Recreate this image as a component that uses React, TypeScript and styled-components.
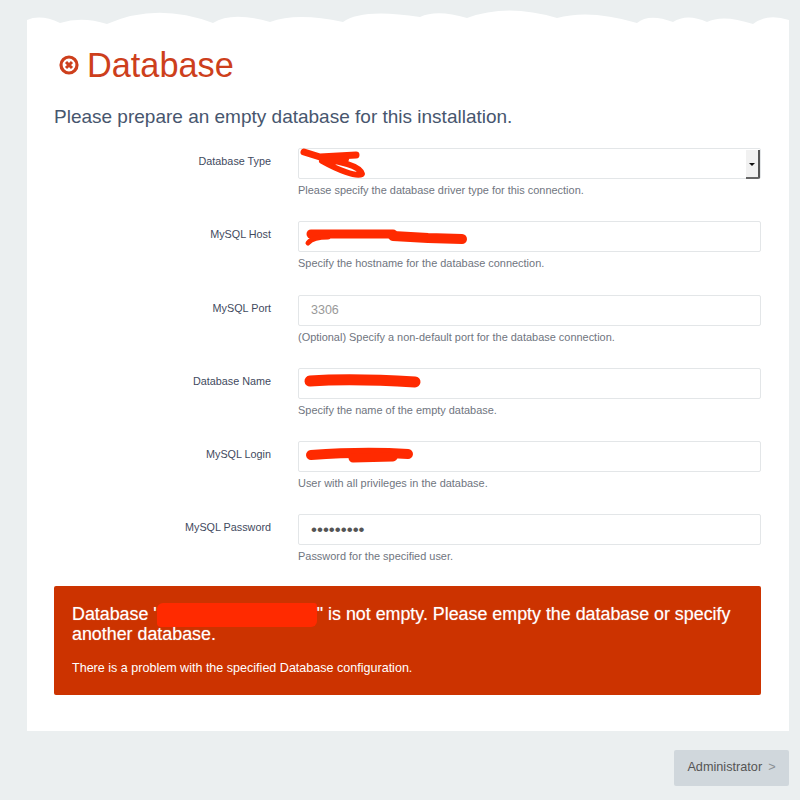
import React from 'react'
import styled, { createGlobalStyle } from 'styled-components'

const GlobalStyle = createGlobalStyle`
  html, body {
    margin: 0;
    padding: 0;
    background: #ebeff0;
    font-family: 'Liberation Sans', Arial, sans-serif;
  }
`

const Page = styled.div`
  width: 800px;
  height: 800px;
  padding: 8px 11px 0 27px;
  box-sizing: border-box;
  overflow: hidden;
`

const CloudEdge = styled.svg`
  display: block;
  width: 762px;
  height: 16px;
`

const Card = styled.main`
  background: #fff;
  height: 707px;
  padding: 19px 28px 0 27px;
  box-sizing: border-box;
`

const Title = styled.h2`
  margin: 0;
  display: flex;
  align-items: center;
  gap: 8px;
  padding-left: 5px;
  height: 44px;
  font-size: 34.3px;
  font-weight: normal;
  color: #cd3f1c;
`

const Lead = styled.h3`
  margin: 17px 0 0;
  font-size: 19px;
  line-height: 26px;
  font-weight: normal;
  color: #47566e;
`

const Form = styled.form`
  margin-top: 18.2px;
  display: flex;
  flex-direction: column;
`

const Row = styled.div`
  display: grid;
  grid-template-columns: 217px 463px;
  column-gap: 27px;
  height: 73.2px;
`

const Label = styled.label`
  padding-top: 6px;
  text-align: right;
  font-size: 10.8px;
  line-height: 14px;
  color: #3f4a5e;
`

const Control = styled.div`
  position: relative;
  height: 31px;
`

const Input = styled.input<{ $masked?: boolean }>`
  width: 100%;
  height: 31px;
  box-sizing: border-box;
  padding: 0 12px;
  border: 1px solid #e3e6e8;
  border-radius: 2px;
  outline: none;
  background: #fff;
  font-family: inherit;
  font-size: ${(p) => (p.$masked ? '17px' : '12.5px')};
  color: #555;

  &::placeholder {
    color: #999;
    opacity: 1;
  }
`

const SelectBox = styled.div`
  height: 31px;
  box-sizing: border-box;
  border: 1px solid #e3e6e8;
  border-radius: 2px;
  display: flex;
  justify-content: flex-end;
  padding: 1px 0 0;
`

const SelectArrow = styled.div`
  width: 12px;
  height: 27px;
  background: #f1f1f1;
  border-right: 2px solid #555;
  border-bottom: 2px solid #666;
  border-radius: 0 0 2px 0;
  display: flex;
  align-items: center;
  justify-content: center;

  &::after {
    content: '';
    margin-top: 2px;
    border-top: 3px solid #111;
    border-left: 3px solid transparent;
    border-right: 3px solid transparent;
  }
`

const Scribble = styled.svg`
  position: absolute;
  left: 0;
  top: 0;
  width: 463px;
  height: 31px;
  overflow: visible;
  fill: none;
  stroke: #ff2a00;
  stroke-linecap: round;
  stroke-linejoin: round;
`

const Hint = styled.p`
  margin: 5px 0 0;
  font-size: 10.95px;
  line-height: 13px;
  color: #6f7580;
`

const Alert = styled.div`
  margin-top: -1.2px;
  height: 109px;
  box-sizing: border-box;
  padding: 18px 18px 0;
  background: #cc3300;
  border-radius: 2px;
  color: #fff;
`

const AlertTitle = styled.p`
  margin: 0;
  font-size: 17.85px;
  line-height: 20px;
  text-shadow: 0 0 1px rgba(255, 255, 255, 0.5);
`

const Redacted = styled.span`
  display: inline-block;
  width: 160px;
  height: 24px;
  margin: -4px 0;
  vertical-align: middle;
  background: #ff2a00;
  border-radius: 6px 3px 6px 4px;
`

const AlertText = styled.p`
  margin: 16px 0 0;
  font-size: 12.55px;
  line-height: 16px;
`

const Footer = styled.div`
  display: flex;
  justify-content: flex-end;
  margin-top: 19px;
`

const NextButton = styled.button`
  width: 115px;
  height: 36px;
  padding: 0 0 2px;
  border: none;
  border-radius: 2px;
  background: #d0d7dc;
  font-family: inherit;
  font-size: 12.7px;
  color: #555;

  span {
    margin-left: 6px;
    color: #8a8f94;
  }
`

const fields = [
  { label: 'MySQL Host', hint: 'Specify the hostname for the database connection.', scribble: 'host' },
  { label: 'MySQL Port', hint: '(Optional) Specify a non-default port for the database connection.', placeholder: '3306' },
  { label: 'Database Name', hint: 'Specify the name of the empty database.', scribble: 'name' },
  { label: 'MySQL Login', hint: 'User with all privileges in the database.', scribble: 'login' },
  { label: 'MySQL Password', hint: 'Password for the specified user.', password: true },
]

function FieldScribble({ kind }: { kind: string }) {
  if (kind === 'type') {
    return (
      <Scribble viewBox='0 0 463 31'>
        <path d='M6 4 L22 9 L58 7' strokeWidth='7' />
        <path d='M48 11 L26 13 C40 12 62 18 64 26 C58 29 40 22 24 13' strokeWidth='6' />
      </Scribble>
    )
  }
  if (kind === 'host') {
    return (
      <Scribble viewBox='0 0 463 31'>
        <path d='M13 13 L95 13' strokeWidth='9' />
        <path d='M95 15 L130 17 L164 18' strokeWidth='10' />
        <path d='M10 22 C14 17 20 16 30 16' strokeWidth='5' />
      </Scribble>
    )
  }
  if (kind === 'name') {
    return (
      <Scribble viewBox='0 0 463 31'>
        <path d='M12 13 C40 11 85 12 117 14' strokeWidth='11' />
      </Scribble>
    )
  }
  return (
    <Scribble viewBox='0 0 463 31'>
      <path d='M13 14 C40 12 80 11 110 13' strokeWidth='10' />
      <path d='M55 17 L95 16' strokeWidth='9' />
    </Scribble>
  )
}

export default function App() {
  return (
    <Page>
      <GlobalStyle />
      <CloudEdge viewBox='0 0 762 16'>
        <path
          fill='#fff'
          d='M0 16 L0 12 Q14 6 33 15 Q55 8 80 16 Q130 -6 186 15 Q205 3 243 14 Q270 4 316 14 Q335 0 393 9 Q410 1 440 10 Q480 -5 530 10 Q563 1 610 15 Q622 5 646 14 Q660 5 680 14 Q696 6 726 16 Q740 5 762 12 L762 16 Z'
        />
      </CloudEdge>
      <Card>
        <Title>
          <svg width='20' height='20' viewBox='0 0 20 20'>
            <circle cx='10' cy='10' r='8' fill='none' stroke='#cd3f1c' strokeWidth='3.2' />
            <path d='M7 7 L13 13 M13 7 L7 13' stroke='#cd3f1c' strokeWidth='3' />
          </svg>
          Database
        </Title>
        <Lead>Please prepare an empty database for this installation.</Lead>
        <Form>
          <Row>
            <Label>Database Type</Label>
            <div>
              <Control>
                <SelectBox>
                  <SelectArrow />
                </SelectBox>
                <FieldScribble kind='type' />
              </Control>
              <Hint>Please specify the database driver type for this connection.</Hint>
            </div>
          </Row>
          {fields.map((field) => (
            <Row key={field.label}>
              <Label>{field.label}</Label>
              <div>
                <Control>
                  <Input
                    readOnly
                    $masked={field.password}
                    type={field.password ? 'password' : 'text'}
                    placeholder={field.placeholder}
                    defaultValue={field.password ? 'secret123' : undefined}
                  />
                  {field.scribble ? <FieldScribble kind={field.scribble} /> : null}
                </Control>
                <Hint>{field.hint}</Hint>
              </div>
            </Row>
          ))}
        </Form>
        <Alert>
          <AlertTitle>
            Database '<Redacted />" is not empty. Please empty the database or specify another database.
          </AlertTitle>
          <AlertText>There is a problem with the specified Database configuration.</AlertText>
        </Alert>
      </Card>
      <Footer>
        <NextButton>
          Administrator<span>&gt;</span>
        </NextButton>
      </Footer>
    </Page>
  )
}
